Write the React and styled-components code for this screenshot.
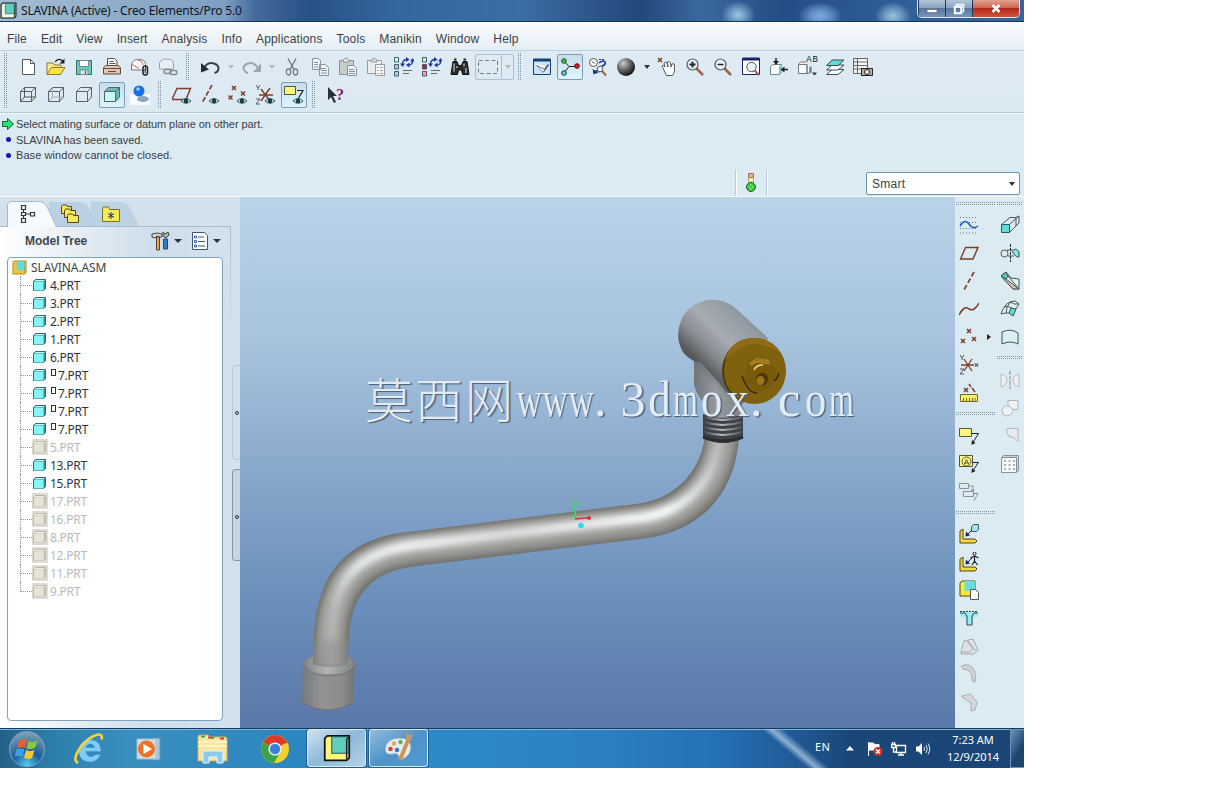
import React from "react";
import styled, { createGlobalStyle, css } from "styled-components";

const GlobalStyle = createGlobalStyle`
  * {
    box-sizing: border-box;
  }

  body {
    margin: 0;
    background: #fff;
    font-family: "Liberation Sans", Arial, sans-serif;
    color: #3a3f44;
    overflow: hidden;
  }

  svg {
    display: block;
    flex: none;
  }
`;

/* ---------- icons, all drawn on a 20 x 20 grid ---------- */

const K = "#222";
const B = "#7a3f28";
const G = "#9aa2a8";
const N = "#16246c";

const Eye = () => (
  <g>
    <path d="M9 16q5-5 10 0q-5 4.500-10 0z" fill="#e6f0f4" stroke="#26584f" />
    <circle cx="14" cy="16" r="2.300" fill="#143c3c" />
  </g>
);

const XMark = ({ x, y, c = B, s = 2 }) => (
  <path
    d={`M${x - s} ${y - s}l${2 * s} ${2 * s}M${x + s} ${y - s}l${-2 * s} ${2 * s}`}
    stroke={c}
    strokeWidth="1.500"
  />
);

const Plane = () => <path d="M1.500 16L6.500 4.500H19L14 16z" stroke={B} strokeWidth="1.400" />;

const Note = () => (
  <g>
    <path d="M.500 2.500h12v8H.500z" fill="#fcf77c" stroke="#554" />
    <path d="M13 7.500h6.500L13 18" stroke={K} />
    <path d="M12.500 19l.5-5 3.500 3z" fill={K} />
  </g>
);

const Cube = ({ front = "none", hidden, side = "none" }) => (
  <g stroke="#5c6165" strokeWidth="1">
    <path d="M2.500 6.500l4-4h11v9.500l-4 4.500h-11z" fill={side} />
    <path d="M2.500 6.500h11v10h-11z" fill={front} />
    <path d="M13.500 6.500l4-4" />
    {hidden && <path d="M6.500 2.500v9.500h11M2.500 16.500l4-4.500" stroke={hidden} />}
  </g>
);

const Magnifier = ({ children }) => (
  <g>
    <path d="M11 11l7 7" stroke="#a0604a" strokeWidth="2.500" />
    <circle cx="7.500" cy="7.500" r="5.500" fill="#e8f3f8" stroke="#555" strokeWidth="1.200" />
    {children}
  </g>
);

const Regen = ({ colors }) => (
  <g>
    {colors.map((c, i) => (
      <path key={i} d={`M.500 ${0.5 + i * 7}h4v4.500h-4z`} fill={c} stroke={i ? "#557" : "#366"} />
    ))}
    <path d="M8.500 7q0-4.500 4.500-4.500M18.500 3.500q.5 4.500-4 4.500" stroke="#1d3c9a" strokeWidth="1.400" />
    <path d="M12 0l3.500 2.500L12 5zM6 6.500h5l-2.500 3.500zM15.500 5.500L12 8l3.500 2.500zM16 4.500h5L18.500 1z" fill="#1d3c9a" />
    <path d="M9 13.500h9M9 16.500h6" stroke="#667" />
  </g>
);

const Binder = ({ line }) => (
  <g>
    <path d="M1 7l3-2v10h12l2 2-2 2H1z" fill="#f5d643" stroke="#54450f" />
    {line}
    <path d="M13 6L8 11" stroke={K} />
    <path d="M6.500 12.500l.5-5 4 4z" fill={N} />
  </g>
);

const icons = {
  newDoc: (
    <g>
      <path d="M4.500 2.500h8l4 4v11h-12z" fill="#fff" stroke="#555" />
      <path d="M12.500 2.500v4h4" stroke="#555" />
    </g>
  ),
  open: (
    <g>
      <path d="M1 17V6h6l1.500 2H15v3" fill="#fbe98a" stroke="#8a7a2a" />
      <path d="M1 17.500l4.500-7H19l-4.500 7z" fill="#fbe345" stroke="#8a7a2a" />
      <path d="M9 5q4-5 8-.5" stroke={K} strokeWidth="1.200" />
      <path d="M18.500 1.500v5h-5z" fill={K} />
    </g>
  ),
  save: (
    <g>
      <path d="M2.500 3.500h15v14h-15z" fill="#62d0bd" stroke="#466" />
      <path d="M5.500 3.500h9v6h-9z" fill="#fff" stroke="#788" />
      <path d="M6 13h8v4.500H6z" fill="#dde5e8" stroke="#788" />
      <path d="M11.500 14v3" stroke="#355" />
    </g>
  ),
  print: (
    <g>
      <path d="M5.500 9V1.500h7l2.500 2.500v5" fill="#fff" stroke="#555" />
      <path d="M7.500 4.500h4M7.500 6.500h6" stroke="#555" />
      <path d="M1.500 10.500l2-2h13l2 2v6.500h-17z" fill="#e0c6b3" stroke="#69493b" />
      <path d="M1.500 11.500h17M6 14.500h8" stroke="#69493b" strokeWidth="1.200" />
    </g>
  ),
  mail: (
    <g>
      <path d="M1.500 13V7q2-5 8-4.500 6 0 6 5V13z" fill="#fff" stroke="#777" />
      <path d="M2 7.500l7 4M8 3q5 1 5 5" stroke="#b06a50" />
      <rect x="13" y="9" width="4.500" height="9" rx="2.200" stroke={K} strokeWidth="1.500" />
      <path d="M15.200 11v5" stroke={K} />
    </g>
  ),
  mailLink: (
    <g>
      <path d="M1.500 12V6q2-4.500 8-4 6 0 6 5v5z" fill="#e8eff3" stroke={G} />
      <rect x="6" y="12.500" width="7" height="4" rx="2" stroke="#888" strokeWidth="1.300" />
      <rect x="12" y="13.500" width="7" height="4" rx="2" stroke="#888" strokeWidth="1.300" />
    </g>
  ),
  undo: (
    <g>
      <path d="M4 11q4-6.500 10-4.500t4 7q-1 2-3.500 2.500" stroke="#3b4046" strokeWidth="2" />
      <path d="M1 6v9.500l8-3z" fill="#222b35" />
    </g>
  ),
  redo: (
    <g>
      <path d="M16 11q-4-6.500-10-4.500t-4 6.500q1 2.500 4 3" stroke="#9ea6ab" strokeWidth="2" />
      <path d="M19 6v9h-8z" fill="#9ea6ab" />
    </g>
  ),
  cut: (
    <g stroke="#757c82">
      <path d="M6 1.500l6 11M14 1.500l-6 11" strokeWidth="1.500" />
      <ellipse cx="6.500" cy="15" rx="2.200" ry="3" strokeWidth="1.300" />
      <ellipse cx="13.500" cy="15" rx="2.200" ry="3" strokeWidth="1.300" />
    </g>
  ),
  copy: (
    <g fill="#edf3f6" stroke="#8e969c">
      <path d="M2.500 1.500h6l2 2v9h-8zM9.500 7.500h6l3 3v8h-9z" />
      <path d="M4 5.500h4M4 7.500h4M4 10h4M11 11.500h5M11 13.500h6M11 16h6" />
    </g>
  ),
  paste: (
    <g fill="#c9ccca" stroke="#8b9196">
      <path d="M1.500 3.500h14v14h-14z" />
      <path d="M5 5V3l3-2 3 2v2z" fill="#eee" />
      <path d="M9.500 8.500h6l3 3v7h-9z" fill="#eef3f5" />
      <path d="M11 12.500h5M11 14.500h6M11 16.500h6" />
    </g>
  ),
  pasteSpecial: (
    <g fill="#eceeee" stroke="#979da1">
      <path d="M1.500 3.500h14v13h-14z" />
      <path d="M5 5V3l3-2 3 2v2z" fill="#ddd" />
      <path d="M9.500 7.500h9v11h-9z" fill="#f4f6f7" />
      <path d="M11 10.500h1.500M14 10.500h3M11 13.500h1.500M14 13.500h3M11 16.500h1.500M14 16.500h3" />
    </g>
  ),
  regen: <Regen colors={["#e8fff6", "#8fe0c0", "#8fe0c0"]} />,
  regenRed: <Regen colors={["#ffd9d9", "#c41f1f", "#ff9b9b"]} />,
  find: (
    <g>
      <path d="M3 4.500h4l1.500 4h3L13 4.500h4l2 13h-6.500L11.500 13h-3l-1 4.500H1z" fill="#2a2c2c" stroke="#111" />
      <path d="M4 6.500v8M7 9v2M14 6.500v3M16 11v5" stroke="#c8d0c8" strokeWidth="1.200" />
      <path d="M4 2.500h2.500M13.500 2.500H16" stroke="#222" strokeWidth="2" />
    </g>
  ),
  select: <path d="M.500 3.500h19v13H.500z" stroke="#737d84" strokeDasharray="4 2.500" />,
  repaint: (
    <g>
      <path d="M1.500 2.500h17v15h-17z" fill="#c8e4f8" stroke="#173f74" />
      <path d="M1.500 3h17" stroke="#173f74" strokeWidth="3" />
      <path d="M4 8l8 8M4 8l9 2" stroke="#fff" strokeWidth="2" />
      <path d="M11 15l5.500-7.500" stroke="#555" strokeWidth="1.500" />
      <path d="M4.500 8.500l6.500 7 2-3z" fill="#fff" stroke="#345" strokeWidth=".7" />
    </g>
  ),
  spin: (
    <g>
      <path d="M4 4l5 5.500M9 9.500h8M9 9.500L4 16" stroke={K} />
      <circle cx="4" cy="4" r="2.300" fill="#44b556" stroke="#145b20" />
      <circle cx="17" cy="9" r="2.300" fill="#d1212c" stroke="#601" />
      <circle cx="4" cy="16" r="2.300" fill="#65d8df" stroke="#134" />
    </g>
  ),
  orient: (
    <g>
      <circle cx="5.500" cy="5.500" r="4" fill="#f6fafc" stroke="#555" />
      <path d="M4 4.500l2.500 2" stroke="#555" />
      <path d="M11 2.500h6" stroke="#1b3193" strokeDasharray="2 1" />
      <path d="M11 6q5-4 6.500 0-1 3-4 3M6 16q3-4 6-1" stroke="#1b3193" strokeWidth="1.500" />
      <path d="M4.500 12l1 5.500 5-2z" fill="#1b3193" />
      <path d="M14 14l4 4.500" stroke="#a0604a" strokeWidth="2" />
      <circle cx="12" cy="12" r="2.800" fill="#f6fafc" stroke="#555" />
    </g>
  ),
  sphere: <circle cx="10" cy="10" r="9" fill="url(#ball)" />,
  hand: (
    <g>
      <XMark x={3} y={3} />
      <path
        d="M5 9q1-2 3 1L7 6q2-2 3 0l1 4-.500-5q2-1.500 3 .5L14 10l1-3q2-1 2.500 1v6q-1 3-2 4.500H9.500z"
        fill="#fff"
        stroke="#555"
      />
    </g>
  ),
  zoomIn: (
    <Magnifier>
      <path d="M4.500 7.500h6M7.500 4.500v6" stroke={K} strokeWidth="1.800" />
    </Magnifier>
  ),
  zoomOut: (
    <Magnifier>
      <path d="M4.500 7.500h6" stroke={K} strokeWidth="1.500" />
    </Magnifier>
  ),
  refit: (
    <g>
      <path d="M1.500 1.500h17v16h-17z" fill="#fff" stroke={N} />
      <path d="M1.500 2h17" stroke={N} strokeWidth="3" />
      <path d="M13 13l5 5" stroke="#a0604a" strokeWidth="2" />
      <circle cx="10.500" cy="10" r="4.700" fill="#e6f2f6" stroke="#555" />
    </g>
  ),
  reorient: (
    <g>
      <path d="M1.500 9.500l2-2h9v8l-2 2h-9z" fill="#fff" stroke="#688" />
      <path d="M10 9.500l3-2v8l-3 2z" fill="#69cbc3" />
      <path d="M7 1v5M19 12.500h-5" stroke={K} strokeWidth="1.500" />
      <path d="M4 4h6L7 8zM15.500 9.500v6l-4-3z" fill={K} />
    </g>
  ),
  saved: (
    <g>
      <path d="M1.500 7.500l2-2.500H9M1.500 7.500h8.500v9H1.500zM10 7.500v9l4-1V10" fill="#fff" stroke="#777" />
      <path d="M12 9.500h2.500v6H12z" fill="#7d96a6" />
      <path d="M15 15.500h5L17.500 18.500z" fill="#234" />
    </g>
  ),
  layers: (
    <g stroke="#3c4b50">
      <path d="M1.500 17.500L7 12.500h12l-6 5z" fill="#fff" />
      <path d="M1.500 13L7 8h12l-6 5z" fill="#fff" />
      <path d="M1.500 8.500L7 3h12l-6 5.500z" fill="#62dcd8" />
    </g>
  ),
  viewMgr: (
    <g>
      <path d="M.500 1.500h14v15H.500zM.500 5h14M.500 8.500h14M.500 12h14M4.500 1.500v15" fill="#f6f6f6" stroke="#666" />
      <path d="M8.500 11.500h11v7h-11z" fill="#b5ad98" stroke={K} />
      <circle cx="14" cy="15" r="2.500" fill="#eee" stroke={K} />
    </g>
  ),
  wire: <Cube hidden="#555" />,
  hiddenLine: <Cube hidden="#aab" />,
  noHidden: <Cube />,
  shaded: <Cube front="#c9fafa" side="#6ab9b8" />,
  enhanced: (
    <g>
      <path d="M0 9h20v11H0z" fill="#fff" opacity=".8" />
      <ellipse cx="13" cy="14" rx="6" ry="3" fill="#8fa3c2" />
      <circle cx="9" cy="6" r="5.500" fill="#1671e6" />
      <circle cx="8" cy="4" r="1.800" fill="#9fd0ff" />
    </g>
  ),
  datumPlane: (
    <g>
      <path d="M0 14.500L5 3.500H18.500L14 14.500z" stroke={B} strokeWidth="1.400" />
      <Eye />
    </g>
  ),
  datumAxis: (
    <g>
      <path d="M12 0L2 18" stroke={B} strokeWidth="1.600" strokeDasharray="5 2" />
      <Eye />
    </g>
  ),
  datumPoint: (
    <g>
      <XMark x={6} y={3} />
      <XMark x={2.500} y={12.500} />
      <XMark x={15} y={8.500} />
      <Eye />
    </g>
  ),
  datumCsys: (
    <g>
      <path d="M3 10h14M5 4l9 12M14 3L5 16" stroke={B} strokeWidth="1.400" />
      <path d="M0 0l2 3 2-3M2 3v2M0 14h4l-4 5h4" stroke="#556" />
      <Eye />
    </g>
  ),
  noteEye: (
    <g>
      <path d="M.500 1.500h11v8H.500z" fill="#fcf77c" stroke="#554" />
      <path d="M13 5.500h6L14 14" stroke={K} strokeWidth="1.200" />
      <Eye />
    </g>
  ),
  help: <path d="M2 2v13l3-3 3 6 2-1-3-6h4z" fill="#2b3036" />,
  sketch: (
    <g>
      <path d="M1 2.500h18M1 7.500h18M1 13.500h18M1 18h18" stroke="#5474a6" strokeDasharray="1 2" />
      <path d="M1 11q5-8 9-2t9 2" stroke="#2562c0" strokeWidth="1.600" />
    </g>
  ),
  plane: <Plane />,
  axis: <path d="M15 1L5 19" stroke={B} strokeWidth="1.700" strokeDasharray="5 2.500" />,
  curve: <path d="M0 16q5-10 10-6 5 3 10-6" stroke={B} strokeWidth="1.500" />,
  points: (
    <g>
      <XMark x={10} y={4} />
      <XMark x={4} y={14} />
      <XMark x={15} y={12} />
    </g>
  ),
  csys: (
    <g>
      <path d="M2 10h13M5 4l8 12M13 4L5 16" stroke={B} strokeWidth="1.300" />
      <path d="M1 0l2 3 2-3M3 3v2M1 14h4l-4 5h4" stroke="#556" />
      <XMark x={17.500} y={10} c="#667" s={1.500} />
    </g>
  ),
  analysis: (
    <g>
      <XMark x={7} y={7} />
      <path d="M10 1l2 3M13 5l3 4" stroke={B} strokeWidth="1.500" />
      <path d="M1.500 11.500h17v7h-17z" fill="#f7ee6a" stroke="#736a25" />
      <path d="M4.500 15v3M7.500 15v3M10.500 15v3M13.500 15v3M16 15v3" stroke="#736a25" />
    </g>
  ),
  note: <Note />,
  noteSym: (
    <g>
      <path d="M.500 1.500h13v11H.500z" fill="#fcf77c" stroke="#554" />
      <path d="M14 8.500h5.500L13 18" stroke={K} />
      <path d="M12.500 19l.5-5 3.500 3z" fill={K} />
      <circle cx="7.500" cy="7.500" r="4.500" stroke="#554" />
      <path d="M5 10.500l2.500-5 2.500 5M6 9h3" stroke="#554" />
    </g>
  ),
  noteGray: (
    <g stroke="#8b9298">
      <path d="M.500 1.500h9v5h-9zM4.500 9.500h10v5h-10zM10 4h4v4M15 11.500h4l-4 7" />
      <path d="M12 8h3l-1.500 2z" />
    </g>
  ),
  assemble: <Binder line={<path d="M12.500 2.500l2-2h5v5l-2 2h-5z" fill="#a3dfec" stroke="#456" />} />,
  manikin: (
    <Binder
      line={
        <g stroke={K}>
          <circle cx="15.500" cy="1.500" r="1.500" />
          <path d="M11.500 6l4-2 4 2M15.500 4v5l-2.500 4M15.500 9l3 4" strokeWidth="1.200" />
        </g>
      }
    />
  ),
  component: (
    <g>
      <path d="M1 3l2-2h13v13l-2 2H1z" fill="#f6e83e" stroke="#54450f" />
      <path d="M5.500 1h10.500v10H5.500z" fill="#65dfdc" />
      <path d="M11.500 9.500h5l3 3v7h-8z" fill="#fff" stroke="#555" />
    </g>
  ),
  trough: (
    <g>
      <path d="M1 4h18v4l-5 2v7H7v-7L1 8z" fill="#9ceef0" />
      <path d="M1 5h5l2 3v9h5V8l2-3h4" stroke="#345" />
      <path d="M1 3.500h18" stroke="#345" strokeDasharray="2 1" />
    </g>
  ),
  grayA: (
    <g fill="#dde2e5" stroke="#a5abaf">
      <path d="M2 16L5 5l9-2 5 11-4 4-13 0z" />
      <path d="M2 16h9l3-3-6-8M9 5l8 10" />
    </g>
  ),
  grayB: <path d="M2 2q9-4 13 4 3 5 1 12l-3-1q1-9-5-11-5 0-6-4z" fill="#cfd4d8" stroke="#a9aeb2" />,
  grayC: <path d="M3 4l8-2 7 8-2 8-4 1V11L3 5z" fill="#d4d8db" stroke="#a9aeb2" />,
  extrude: (
    <g>
      <path d="M10 2.500h6l3-1.500v7l-3 3v-8l3-2" stroke="#48555b" />
      <path d="M1.500 9.500L10 2.500M9.500 9.500L16 3.500M9.500 17.500l6.500-6.500" stroke="#48555b" />
      <path d="M1.500 9.500h8v8h-8z" fill="#55e2df" stroke="#355" />
    </g>
  ),
  revolve: (
    <g>
      <circle cx="4.500" cy="10.500" r="3.500" stroke="#555" />
      <path d="M10.500 1v18" stroke={K} strokeDasharray="3 1" />
      <path d="M12 8q4-4 7 1v5q-3 1-7-6z" fill="#8be4dd" stroke="#355" />
      <path d="M7 7h5M8 13h6" stroke="#355" />
    </g>
  ),
  sweep: (
    <g stroke="#455">
      <path d="M1 5l5-4 5 6 8 1v10h-6z" fill="#d9f6f3" />
      <path d="M1 5l5 3 13 10h-6z" fill="#e5b9b4" />
      <path d="M1 5l5-4 2 4-2 3z" fill="#55c9c0" />
      <path d="M8 5l11 13" />
    </g>
  ),
  blend: (
    <g stroke="#455">
      <path d="M1 15Q5 2 15 2l4 3q-4 5-6 12-3-5-12-2z" fill="#dff6f6" />
      <path d="M10 3q4 3 9 2M4 8q6-2 11 4" />
      <path d="M11 9l5 1-3 7-4-3z" fill="#5cdfdc" />
      <path d="M10 3Q6 8 6 14" />
    </g>
  ),
  style: <path d="M2 5q9-4 16 1v11q-8-4-16 0z" fill="#d9eff2" stroke="#48555b" />,
  mirror: (
    <g stroke="#b9bfc3" fill="#e8edef">
      <path d="M1 17V4q6 1 6 6 0 6-6 7zM19 17V4q-6 1-6 6 0 6 6 7z" />
      <path d="M10 1v18" strokeDasharray="4 1" stroke="#889" />
    </g>
  ),
  merge: (
    <g stroke="#b0b6ba" fill="#eff2f4">
      <path d="M8 2.500h10v9H8z" />
      <path d="M2 12q1-5 7-4l4 3q0 6-6 7-5-1-5-6z" />
    </g>
  ),
  trim: <path d="M7 2.500h11v13l-4-4-5-1q-3-4-2-8z" fill="#e8ecee" stroke="#b0b6ba" />,
  pattern: (
    <g>
      <path d="M1.500 3.500l2-2h15v15l-2 2h-15z" fill="#cbd1d6" stroke="#8a9298" />
      <path d="M1.500 3.500h15v15h-15z" fill="#f6f8fa" stroke="#8a9298" />
      <path d="M4 7h11M4 11h11M4 15h11" stroke="#8e98ac" strokeWidth="1.500" strokeDasharray="2 2.500" />
    </g>
  ),
  tree: (
    <path d="M2.500 1.500h4v4h-4zM2.500 8.500h4v3h-4zM2.500 14.500h4v4h-4zM11.500 8.500h4v3.500h-4zM4.500 5.500v3M6.500 10h5M4.500 11.500v3" stroke="#333" strokeWidth="1.200" />
  ),
  folders: (
    <g fill="#f8e95c" stroke="#4d4620">
      <path d="M1.500 2.500l1-1.500h4l1 1.500h4v7h-10z" />
      <path d="M4.500 6.500l1-1.500h4l1 1.500h5v7h-11z" />
      <path d="M7.500 11.500l1-1.500h4l1 1.500h5v7h-11z" />
    </g>
  ),
  favorites: (
    <g>
      <path d="M1.500 5.500l1-2.500h5l1 2.500h10v12h-17z" fill="#f8ec55" stroke="#777033" />
      <path d="M10 8v7M7 9.500l6 4M13 9.500l-6 4" stroke={N} />
    </g>
  ),
  tools: (
    <g>
      <path d="M1 6V3q6-2 10 0v3H8L6 5 4 7z" fill="#cdd6da" stroke="#444" />
      <path d="M5.500 6h3v13h-3z" fill="#f5a933" stroke="#444" />
      <path d="M12 1l2 2 3-2 1 3-3 3-3-2z" fill="#9ba" stroke="#444" />
      <path d="M12.500 8h4v10h-4z" fill="#2e7ad1" stroke="#444" />
    </g>
  ),
  settings: (
    <g>
      <path d="M2.500 1.500h12l3 3v14h-15z" fill="#fff" stroke="#456" />
      <path d="M8 6h6M8 10.500h7M8 15h7" stroke="#456" strokeWidth="1.200" />
      <path d="M4.500 5h2v2h-2zM4.500 9.500h2v2h-2zM4.500 14h2v2h-2z" stroke="#2a63b5" />
    </g>
  ),
  light: (
    <g>
      <path d="M7.500 .500h5v4h-5z" fill="#efa4a1" stroke="#a66" />
      <path d="M7.500 5h5v4h-5z" fill="#ffffc2" stroke="#aa5" />
      <circle cx="10" cy="14" r="4.500" fill="#3dc443" stroke="#1a6420" />
      <path d="M7 13l4 4M9 11l4 4" stroke="#8fef8d" />
    </g>
  ),
};

const Icon = ({ name, size = 20 }) => (
  <svg width={size} height={size} viewBox="0 0 20 20" fill="none">
    {icons[name]}
  </svg>
);

const App = () => {
  return (
    <Desktop>
      <GlobalStyle />
      <Defs width="0" height="0">
        <radialGradient id="ball" cx=".35" cy=".3" r=".75">
          <stop offset="0" stopColor="#ccc" />
          <stop offset=".5" stopColor="#666" />
          <stop offset="1" stopColor="#0c0c0c" />
        </radialGradient>
      </Defs>
      <TitleBar />
      <MenuBar />
      <Toolbars />
      <Messages />
      <Workspace>
        <Navigator />
        <Viewport />
        <FeatureBar />
      </Workspace>
      <Taskbar />
    </Desktop>
  );
};

/* ---------- window frame ---------- */

const PartLogo = ({ size = 16, c = "#f8f47c", plain }) => (
  <svg width={size} height={size} viewBox="0 0 16 16">
    <path d="M1 2.500L2.500 1H15v12.500L13.500 15H1z" fill={c} stroke={plain ? "#a18b25" : "#111"} />
    <path d="M5 1.500h9.500V11H5z" fill={plain ? "#62dce0" : "#5fcfc0"} stroke={plain ? "none" : "#355"} strokeWidth=".6" />
    <path d="M13.500 3v11.500M13.500 3L15 1.500" stroke={plain ? "#b48c22" : "#222"} strokeWidth=".8" />
  </svg>
);

const TitleBar = () => (
  <Title>
    <PartLogo size={17} c="#eef7df" />
    <TitleText>SLAVINA (Active) - Creo Elements/Pro 5.0</TitleText>
    <WindowButtons>
      <WinButton $w={27}>
        <svg width="12" height="8" viewBox="0 0 12 8">
          <path d="M1 4.500h10v3H1z" fill="#fff" stroke="#445" strokeWidth=".5" />
        </svg>
      </WinButton>
      <WinButton $w={27}>
        <svg width="12" height="12" viewBox="0 0 12 12" fill="none" stroke="#fff">
          <path d="M3.500 3V1.500h7v7H9" strokeWidth="1.500" />
          <path d="M1.800 3.800h6.400v6.400H1.800z" strokeWidth="2" />
        </svg>
      </WinButton>
      <WinButton $w={47} $close>
        <svg width="10" height="9" viewBox="0 0 10 9">
          <path d="M1.500 1l7 7M8.500 1l-7 7" stroke="#fff" strokeWidth="2.600" />
        </svg>
      </WinButton>
    </WindowButtons>
  </Title>
);

const menus = [
  "File",
  "Edit",
  "View",
  "Insert",
  "Analysis",
  "Info",
  "Applications",
  "Tools",
  "Manikin",
  "Window",
  "Help",
];

const MenuBar = () => (
  <Menu>
    {menus.map((m) => (
      <span key={m}>{m}</span>
    ))}
  </Menu>
);

const Tools = ({ names, active }) =>
  names.split(" ").map((n) => (
    <Cell key={n} $active={n === active}>
      <Icon name={n} />
    </Cell>
  ));

const Toolbars = () => (
  <ToolArea>
    <ToolRow>
      <Handle />
      <Tools names="newDoc open save print mail mailLink" />
      <Handle />
      <Tools names="undo" />
      <CaretBox $w={14}>
        <Caret $dim />
      </CaretBox>
      <Tools names="redo" />
      <CaretBox $w={12}>
        <Caret $dim />
      </CaretBox>
      <Tools names="cut copy paste pasteSpecial regen regenRed find" />
      <SelectTool>
        <Icon name="select" />
        <SelectCaret>
          <Caret $dim />
        </SelectCaret>
      </SelectTool>
      <Handle />
      <Tools names="repaint spin orient sphere" active="spin" />
      <CaretBox $w={13}>
        <Caret />
      </CaretBox>
      <Tools names="hand zoomIn zoomOut refit reorient" />
      <Cell>
        <Icon name="saved" />
        <Letters>AB</Letters>
      </Cell>
      <Tools names="layers viewMgr" />
    </ToolRow>
    <ToolRow>
      <Handle />
      <Tools names="wire hiddenLine noHidden shaded enhanced" active="shaded" />
      <Handle />
      <Tools names="datumPlane datumAxis datumPoint datumCsys noteEye" active="noteEye" />
      <Handle />
      <Cell>
        <Icon name="help" />
        <Question>?</Question>
      </Cell>
    </ToolRow>
  </ToolArea>
);

const Messages = () => (
  <MessageArea>
    <MessageLine>
      <svg width="12" height="12" viewBox="0 0 12 12">
        <path d="M.500 3.500h5V.500L11.500 6l-6 5.500v-3h-5z" fill="#2be070" stroke="#063" />
      </svg>
      Select mating surface or datum plane on other part.
    </MessageLine>
    <MessageLine>
      <Bullet />
      SLAVINA has been saved.
    </MessageLine>
    <MessageLine $wide>
      <Bullet />
      Base window cannot be closed.
    </MessageLine>
    <StatusLine>
      <StatusLight>
        <Icon name="light" />
      </StatusLight>
      <Filter>
        Smart
        <Caret />
      </Filter>
    </StatusLine>
  </MessageArea>
);

/* ---------- navigator ---------- */

const parts = [
  { name: "4.PRT" },
  { name: "3.PRT" },
  { name: "2.PRT" },
  { name: "1.PRT" },
  { name: "6.PRT" },
  { name: "7.PRT", packed: true },
  { name: "7.PRT", packed: true },
  { name: "7.PRT", packed: true },
  { name: "7.PRT", packed: true },
  { name: "5.PRT", off: true },
  { name: "13.PRT" },
  { name: "15.PRT" },
  { name: "17.PRT", off: true },
  { name: "16.PRT", off: true },
  { name: "8.PRT", off: true },
  { name: "12.PRT", off: true },
  { name: "11.PRT", off: true },
  { name: "9.PRT", off: true },
];

const PartIcon = ({ off }) => (
  <svg width="16" height="16" viewBox="0 0 16 16">
    {off && <path d="M0 0h16v16H0z" fill="#dedbd0" />}
    <path d="M1.500 4.500l2-2h10v9l-2 2h-10z" fill={off ? "#c9c7bc" : "#3d8f93"} stroke={off ? "#b8b6aa" : "#37686b"} />
    <path d="M2 4.500h9.500v9H2z" fill={off ? "#e8e4d8" : "#84f4f7"} />
    <path d="M2.500 4l1.500-1h9l-1.500 1z" fill={off ? "#f5f2e8" : "#c8ffff"} />
  </svg>
);

const Navigator = () => (
  <NavPanel>
    <NavMain>
      <Tabs>
        <svg width="140" height="26" viewBox="0 0 140 26">
          <path d="M84 25V1h31q5 0 8 6l9 18z" fill="#bdd3e4" />
          <path d="M42 25V1h32q5 0 8 6l9 18z" fill="#bad1e3" />
          <path d="M.500 26V4q0-3.500 4-3.500h27q6 0 9 6l9 19.500z" fill="#f7fafc" />
          <path d="M.500 26V4q0-3.500 4-3.500h27q6 0 9 6l9 19.500" fill="none" stroke="#a6b9c9" />
        </svg>
        <TabIcons>
          <Icon name="tree" />
          <Icon name="folders" />
          <Icon name="favorites" />
        </TabIcons>
      </Tabs>
      <NavBody>
        <NavHeader>
          <NavTitle>Model Tree</NavTitle>
          <NavTool>
            <Icon name="tools" />
            <Caret $big />
          </NavTool>
          <NavTool>
            <Icon name="settings" />
            <Caret $big />
          </NavTool>
        </NavHeader>
        <TreeBox>
          <RootRow>
            <PartLogo size={15} c="#f3c43e" plain />
            SLAVINA.ASM
          </RootRow>
          {parts.map((p, i) => (
            <TreeRow key={i} $off={p.off} $last={i === parts.length - 1}>
              <PartIcon off={p.off} />
              {p.packed && <Packed />}
              <span>{p.name}</span>
            </TreeRow>
          ))}
        </TreeBox>
      </NavBody>
    </NavMain>
    <Splitters>
      <Splitter>
        <Dot />
      </Splitter>
      <Splitter $dark>
        <Dot />
      </Splitter>
    </Splitters>
  </NavPanel>
);

/* ---------- 3D view ---------- */

const TUBE = "M330 668L331 640C333 585 355 556 415 548L640 521C690 515 718 480 722 436";

const Faucet = () => (
  <svg width="715" height="531" viewBox="240 197 715 531" fill="none">
    <defs>
      <filter id="soft3" filterUnits="userSpaceOnUse" x="240" y="197" width="715" height="531">
        <feGaussianBlur stdDeviation="3" />
      </filter>
      <filter id="soft2" filterUnits="userSpaceOnUse" x="240" y="197" width="715" height="531">
        <feGaussianBlur stdDeviation="2" />
      </filter>
      <linearGradient id="shine" gradientUnits="userSpaceOnUse" x1="330" y1="0" x2="725" y2="0">
        <stop offset="0" stopColor="#e8efef" stopOpacity="0" />
        <stop offset=".07" stopColor="#e8efef" stopOpacity=".75" />
        <stop offset=".2" stopColor="#eceeed" />
        <stop offset=".45" stopColor="#e3e4e2" stopOpacity=".75" />
        <stop offset=".85" stopColor="#f4f8f8" />
        <stop offset=".97" stopColor="#e8efef" stopOpacity=".3" />
        <stop offset="1" stopColor="#e8efef" stopOpacity="0" />
      </linearGradient>
      <linearGradient id="body" gradientUnits="userSpaceOnUse" x1="748" y1="312" x2="699" y2="362">
        <stop offset="0" stopColor="#7f8991" />
        <stop offset=".15" stopColor="#959da4" />
        <stop offset=".5" stopColor="#a5acb2" />
        <stop offset=".78" stopColor="#868b8f" />
        <stop offset="1" stopColor="#56595c" />
      </linearGradient>
      <linearGradient id="neck">
        <stop offset="0" stopColor="#6e7478" />
        <stop offset=".4" stopColor="#959ba0" />
        <stop offset="1" stopColor="#7b7e80" />
      </linearGradient>
      <linearGradient id="thread">
        <stop offset="0" stopColor="#45474a" />
        <stop offset=".45" stopColor="#b8bdbe" />
        <stop offset="1" stopColor="#515457" />
      </linearGradient>
      <linearGradient id="cap">
        <stop offset="0" stopColor="#77797b" />
        <stop offset=".35" stopColor="#929392" />
        <stop offset=".75" stopColor="#8c8c8b" />
        <stop offset="1" stopColor="#737476" />
      </linearGradient>
      <linearGradient id="rim">
        <stop offset="0" stopColor="#7f8385" />
        <stop offset=".45" stopColor="#b2b5b5" />
        <stop offset="1" stopColor="#7f8284" />
      </linearGradient>
      <clipPath id="tubeClip">
        <path d="M313 664L314 640C316 575 345 537 412 531.500L636 504C672 500 700 475 705 436L739 436C736 492 702 532 643 538.500L417 566C367 571 350 600 349 640L347 664q-17 6-34 0z" />
      </clipPath>
    </defs>

    {/* outlet collar */}
    <path d="M303 665q0-8 8-8h36q8 0 8 8L353 703q-24 14-51 0z" fill="url(#cap)" />
    <path d="M304 662q4-5 12-5h28q9 1 11 6-3 11-26 11-22 0-25-12z" fill="url(#rim)" />
    <path d="M303 666q8 10 26 10t26-10" stroke="#747779" />
    <path d="M302 703q25 14 51 0" stroke="#6d706f" />

    {/* spout */}
    <g clipPath="url(#tubeClip)">
      <path d={TUBE} stroke="#6e6d6a" strokeWidth="46" />
      <path d={TUBE} stroke="#979793" strokeWidth="29" filter="url(#soft3)" />
      <path d={TUBE} stroke="#acadab" strokeWidth="16" filter="url(#soft3)" transform="translate(-1 -2)" />
      <path d={TUBE} stroke="url(#shine)" strokeWidth="10" filter="url(#soft3)" transform="translate(-1 -3)" />
      <path d={TUBE} stroke="url(#shine)" strokeWidth="3" filter="url(#soft2)" transform="translate(-1 -3)" />
      <path d="M305 640h50v30h-50z" fill="#8b8b8a" opacity=".45" filter="url(#soft3)" />
    </g>

    {/* valve body */}
    <path d="M694 350V384Q696 395 705 404V418H742V404L750 398L735 350z" fill="url(#neck)" />
    <path d="M678 336Q679 308 704 301Q720 297 734 307L768 338L740 400Q727 396 720 384L701 363Q680 359 678 336z" fill="url(#body)" />
    <path d="M697 362L722 386L738 402" stroke="#666b70" strokeWidth="2" filter="url(#soft2)" />

    {/* thread */}
    <path d="M703 414q19 8 40 0v24q-20 10-40 0z" fill="#3e4145" />
    {[417, 422, 427, 432].map((y) => (
      <path key={y} d={`M704 ${y}q19 6 38 0`} stroke="url(#thread)" strokeWidth="2" />
    ))}
    <path d="M703 437q20 8 40 0" stroke="#292c30" strokeWidth="3" />

    {/* brass plug */}
    <ellipse cx="752" cy="371" rx="30" ry="32" fill="#49390c" />
    <ellipse cx="755" cy="371" rx="31" ry="33" fill="#80610f" />
    <path d="M725 360Q731 339 752 338Q773 338 780 353Q758 338 741 348Q728 356 725 360z" fill="#8e6b15" />
    <path d="M748 360l20-2 10 15-6 13-15 7-13-14z" fill="#785a0a" />
    <path d="M749 363l7-5 12 1 3 6-14-2-6 3z" fill="#a07c1f" />
    <path d="M754 370q2-5 9-5" stroke="#f4d987" strokeWidth="1.500" />
    <path d="M742 376q6 17 15 17M774 381q4-3 5-8" stroke="#332707" strokeWidth="1.400" />
    <ellipse cx="762" cy="379" rx="6" ry="6.500" fill="#4c3905" />
    <ellipse cx="760.500" cy="380.500" rx="4" ry="4.500" fill="#9b761a" />

    {/* spin center */}
    <path d="M575 518v-12M571 505l4-3 4 3" stroke="#2fe05a" strokeWidth="1.500" />
    <path d="M575 519l12-1" stroke="#d83030" strokeWidth="1.300" />
    <circle cx="589" cy="518" r="2" fill="#e03030" />
    <circle cx="581" cy="525.500" r="2.800" fill="#27d9ee" />
  </svg>
);

const squeeze = { w: 0.7, m: 0.64, d: 0.9, o: 0.85, x: 0.9 };

const Viewport = () => (
  <View>
    <Faucet />
    <Watermark>
      <Hanzi>莫西网</Hanzi>
      {"www.3dmox.com".split("").map((ch, i) => (
        <Glyph key={i} $x={squeeze[ch] || 1} $left={ch === "."}>
          <span>{ch}</span>
        </Glyph>
      ))}
    </Watermark>
  </View>
);

const SideTools = ({ names }) =>
  names.split(" ").map((n) => (
    <Cell key={n}>
      <Icon name={n} />
      {n === "points" && <Flyout />}
    </Cell>
  ));

const FeatureBar = () => (
  <Side>
    <SideCol $w={41}>
      <Rule />
      <SideTools names="sketch plane axis curve points csys analysis" />
      <Rule />
      <SideTools names="note noteSym noteGray" />
      <Rule />
      <SideTools names="assemble manikin component trough grayA grayB grayC" />
    </SideCol>
    <SideCol $w={28}>
      <Rule />
      <SideTools names="extrude revolve sweep blend style" />
      <Rule />
      <SideTools names="mirror merge trim pattern" />
    </SideCol>
  </Side>
);

/* ---------- taskbar ---------- */

const StartOrb = () => (
  <svg width="38" height="38" viewBox="0 0 38 38">
    <defs>
      <radialGradient id="orb" cx=".5" cy=".95" r=".9">
        <stop offset="0" stopColor="#4fd0f5" />
        <stop offset=".45" stopColor="#185d95" />
        <stop offset="1" stopColor="#7d9eb5" />
      </radialGradient>
    </defs>
    <circle cx="19" cy="19" r="17.500" fill="url(#orb)" stroke="#79a5bf" />
    <path d="M11 11q4-3 8-.5L17 18q-4-2-8 0z" fill="#e9602c" />
    <path d="M20.500 11q4 2 9-.5L27 18q-4 2-8.500.5z" fill="#8cc63f" />
    <path d="M8.500 19.500q4-2 8 0L14.500 27q-4-2-8 0z" fill="#3f9fe6" />
    <path d="M18 20q4 2 8.500 0L24 28q-4 2-8-.5z" fill="#fdc72e" />
  </svg>
);

const IeLogo = () => (
  <svg width="32" height="32" viewBox="0 0 32 32" fill="none">
    <path d="M28 18.500H13q.500 5 5 5 3 0 4.500-2H27.500q-3 7.500-10.500 7.500Q6 28.500 5.500 17.500 7 7 17 6.500q11 .5 11 12zM13 14.500h8.500q-1-3.500-4.200-3.500T13 14.500z" fill="#7fcdf6" stroke="#3c97d2" strokeWidth=".7" />
    <path d="M5 30Q-1 27 7 15 15 4 25 1.500q5-.5 3.500 5" stroke="#f4d23a" strokeWidth="2.600" />
  </svg>
);

const MediaLogo = () => (
  <svg width="26" height="26" viewBox="0 0 26 26">
    <path d="M17 2h7v22h-7z" fill="#a9c9df" stroke="#5f93b8" />
    <path d="M1 3h19v20H1z" fill="#cfdce6" stroke="#a3bccd" />
    <circle cx="10.500" cy="13" r="8.500" fill="#ee7225" />
    <path d="M7.500 8l8.500 5-8.500 5z" fill="#fff" />
  </svg>
);

const ExplorerLogo = () => (
  <svg width="34" height="30" viewBox="0 0 34 30">
    <path d="M2 3q0-2 2-2h8l2 2h15q2 0 2 2v22H2z" fill="#f7e6a0" stroke="#c9ac5a" />
    <path d="M5 2.500h4M15 4h3" stroke="#3fa34c" strokeWidth="2" />
    <path d="M12 3.500h3M24 4.500h4" stroke="#c54334" strokeWidth="2" />
    <path d="M2 8h29M2 12h29" stroke="#fff6cf" strokeWidth="1.500" />
    <path d="M7 29V17h20v12h-6v-6h-8v6z" fill="#8ccbec" stroke="#e2f6ff" />
  </svg>
);

const ChromeLogo = () => (
  <svg width="30" height="30" viewBox="0 0 30 30">
    <circle cx="15" cy="15" r="14" fill="#f6cf2f" />
    <path d="M15 15L2.900 8A14 14 0 0 1 27.100 8z" fill="#dc3a2c" />
    <path d="M15 15L2.900 8A14 14 0 0 0 14 29l7-12z" fill="#3ba24a" />
    <path d="M15 8.500h12.400" stroke="#dc3a2c" strokeWidth="1.500" />
    <circle cx="15" cy="15" r="6.600" fill="#f2f2ee" />
    <circle cx="15" cy="15" r="5.200" fill="#3d7fd6" />
  </svg>
);

const PaintLogo = () => (
  <svg width="32" height="32" viewBox="0 0 32 32">
    <path d="M2 17Q3 7 15 6t13 9q0 8-8 12-4 2-4-2-1-4-5-3-9 2-9-5z" fill="#e3edf4" stroke="#8aa6bd" />
    <circle cx="7.500" cy="17" r="2.300" fill="#d9442f" />
    <circle cx="11" cy="11.500" r="2.200" fill="#efa63b" />
    <circle cx="17.500" cy="10" r="2.200" fill="#61b54b" />
    <circle cx="14" cy="18" r="2.200" fill="#3c74c4" />
    <path d="M26 6L17 28" stroke="#d0924f" strokeWidth="4" />
    <path d="M23 1l3 2 4-1-2 7-5-1z" fill="#bd9871" />
  </svg>
);

const Taskbar = () => (
  <TaskBar>
    <TaskSlot $w={54}>
      <StartOrb />
    </TaskSlot>
    <TaskSlot $w={70}>
      <IeLogo />
    </TaskSlot>
    <TaskSlot $w={50}>
      <MediaLogo />
    </TaskSlot>
    <TaskSlot $w={78}>
      <ExplorerLogo />
    </TaskSlot>
    <TaskSlot $w={46}>
      <ChromeLogo />
    </TaskSlot>
    <TaskButton $bright>
      <PartLogo size={28} c="#fbf67a" />
    </TaskButton>
    <TaskButton>
      <PaintLogo />
    </TaskButton>
    <Lang>EN</Lang>
    <Tray>
      <svg width="8" height="5" viewBox="0 0 8 5">
        <path d="M0 4.500L4 0l4 4.500z" fill="#fff" />
      </svg>
      <svg width="16" height="16" viewBox="0 0 16 16">
        <path d="M1.500 1v14M2 2h4l2 1.500h4V9H2z" fill="#fff" stroke="#fff" />
        <circle cx="11" cy="10.500" r="4.500" fill="#d22d22" />
        <path d="M9 8.500l4 4M13 8.500l-4 4" stroke="#fff" strokeWidth="1.500" />
      </svg>
      <svg width="16" height="16" viewBox="0 0 16 16" fill="none" stroke="#fff">
        <path d="M5.500 4.500h9v7h-9zM7 14h6M10 11.500V14M.500 3.500h4v3h-4zM1.500 1v2M3.500 1v2M2.500 6.500V11h3" strokeWidth="1.300" />
      </svg>
      <svg width="16" height="16" viewBox="0 0 16 16" fill="none">
        <path d="M1 5.500h2.500L7 2v12l-3.500-3.500H1z" fill="#fff" />
        <path d="M9 6q1 2 0 4M11 4q2.500 4 0 8M13 2.500q3.500 5.500 0 11" stroke="#dfe9f2" />
      </svg>
    </Tray>
    <Clock>
      <span>7:23 AM</span>
      <span>12/9/2014</span>
    </Clock>
    <ShowDesktop />
  </TaskBar>
);

/* ---------- styles ---------- */

const dots = css`
  background-image: radial-gradient(circle at 0.5px 0.5px, #7d93a4 0.7px, transparent 0.8px);
  background-size: 2px 2px;
`;

const Desktop = styled.div`
  width: 1024px;
  height: 768px;
  display: flex;
  flex-direction: column;
  background: #dceaf3;
  overflow: hidden;
`;

const Defs = styled.svg`
  position: absolute;
`;

const Title = styled.header`
  display: flex;
  align-items: flex-start;
  height: 22px;
  padding: 2px 4px 0 0;
  border-bottom: 1px solid #19365f;
  background:
    radial-gradient(ellipse 17px 14px at 738px 15px, #9dc5df 0, rgba(125, 169, 205, 0.8) 45%, transparent),
    radial-gradient(ellipse 22px 14px at 820px 16px, #7fabe0 0, rgba(109, 155, 211, 0.8) 45%, transparent),
    radial-gradient(ellipse 18px 14px at 893px 16px, #9cc4df 0, rgba(125, 169, 205, 0.8) 45%, transparent),
    linear-gradient(to right, #a5bdd3 0, #8dabc9 130px, #7e9fc4 225px, #436a9b 255px, #275187 310px, #34659c 390px, #3c6da5 520px, #22477b 640px, #3b699f 700px, #244d86 780px, #305e96 900px, #37649b 1024px);
`;

const TitleText = styled.div`
  margin-left: 4px;
  margin-top: 1px;
  width: 226px;
  font: 12px/16px "Noto Sans", "Open Sans", sans-serif;
  letter-spacing: -0.17px;
  white-space: nowrap;
  color: #10151c;
`;

const WindowButtons = styled.div`
  display: flex;
  margin: -2px 0 0 auto;
  height: 18px;
  border: 1px solid #dce8f3;
  border-top: 0;
  border-radius: 0 0 5px 5px;
  overflow: hidden;
`;

const WinButton = styled.div`
  display: flex;
  align-items: center;
  justify-content: center;
  width: ${({ $w }) => $w}px;
  border-left: 1px solid #22395a;
  background: ${({ $close }) =>
    $close
      ? "linear-gradient(#e2a193 0, #cf6551 45%, #b02a1b 50%, #d4543a)"
      : "linear-gradient(#b3c4d8 0, #8ca4c0 45%, #57769d 50%, #7798bd)"};
`;

const Menu = styled.nav`
  display: flex;
  align-items: center;
  gap: 14px;
  height: 29px;
  padding: 5px 0 0 7px;
  font-size: 12px;
  letter-spacing: 0.15px;
  border-bottom: 1px solid #bcd2e3;
  background: linear-gradient(#fafcfe, #e4eef5);
`;

const ToolArea = styled.div`
  height: 62px;
  padding-top: 2px;
  border-bottom: 1px solid #b4cadb;
  background: linear-gradient(#deebf4, #dbe9f2);
`;

const ToolRow = styled.div`
  display: flex;
  align-items: center;
  height: 28px;
`;

const Handle = styled.div`
  width: 14px;
  height: 28px;
  padding: 0 6px 0 4px;

  &::before {
    content: "";
    display: block;
    height: 27px;
    ${dots}
  }
`;

const Cell = styled.div`
  position: relative;
  display: flex;
  align-items: center;
  justify-content: center;
  flex: none;
  width: 28px;
  height: 28px;

  ${({ $active }) =>
    $active &&
    css`
      width: 26px;
      height: 26px;
      margin: 0 1px;
      border: 1px solid #7e9db5;
      border-radius: 2px;
      background: linear-gradient(#c7dced, #def4fd);
    `}
`;

const Letters = styled.span`
  position: absolute;
  right: 2px;
  top: 3px;
  font: 9px/9px "Liberation Mono", monospace;
  letter-spacing: 1px;
  color: #222;
`;

const Question = styled.span`
  position: absolute;
  left: 14px;
  top: 5px;
  font: bold 16px/18px "Liberation Serif", serif;
  color: #8a1082;
`;

const Caret = styled.i`
  flex: none;
  width: 0;
  height: 0;
  border: solid transparent;
  border-width: ${({ $big }) => ($big ? "4px 4px 0" : "4px 3px 0")};
  border-top-color: ${({ $dim }) => ($dim ? "#b2bcc4" : "#2d343a")};
`;

const CaretBox = styled.div`
  display: flex;
  justify-content: center;
  width: ${({ $w }) => $w}px;
`;

const SelectTool = styled.div`
  display: flex;
  align-items: center;
  width: 39px;
  height: 26px;
  margin-left: 1px;
  padding-left: 2px;
  border: 1px solid #adc0ce;
  border-radius: 2px;
`;

const SelectCaret = styled.div`
  display: flex;
  align-items: center;
  justify-content: center;
  align-self: stretch;
  flex: 1;
  margin-left: 3px;
  border-left: 1px solid #adc0ce;
`;

const MessageArea = styled.section`
  display: flex;
  flex-direction: column;
  height: 84px;
  padding-top: 2px;
  border-top: 1px solid #f6fafc;
  border-bottom: 1px solid #f4f9fc;
  background: #dceaf3;
`;

const MessageLine = styled.p`
  display: flex;
  align-items: center;
  gap: 2px;
  height: 16px;
  margin: 0;
  padding-left: 2px;
  font-size: 11px;
  letter-spacing: ${({ $wide }) => ($wide ? "0.08px" : "-0.07px")};
`;

const Bullet = styled.i`
  width: 5px;
  height: 5px;
  margin: 0 3px 0 4px;
  border-radius: 50%;
  background: #1513b4;
`;

const StatusLine = styled.div`
  display: flex;
  align-items: flex-start;
  margin-top: 7px;
`;

const StatusLight = styled.div`
  display: flex;
  align-items: center;
  justify-content: center;
  width: 32px;
  height: 26px;
  margin-left: 735px;
  border: solid #b9cad7;
  border-width: 0 1px;
  box-shadow: inset 1px 0 #fff, 1px 0 #fff;
`;

const Filter = styled.div`
  display: flex;
  align-items: center;
  justify-content: space-between;
  width: 154px;
  height: 23px;
  margin: 2px 0 0 99px;
  padding: 0 4px 0 5px;
  border: 1px solid #6f93b3;
  border-radius: 2px;
  background: #fff;
  font-size: 12px;
  letter-spacing: 0.3px;
`;

const Workspace = styled.main`
  display: flex;
  height: 531px;
`;

const NavPanel = styled.aside`
  display: flex;
  width: 240px;
  background: #d3e1ed;
`;

const NavMain = styled.div`
  display: flex;
  flex-direction: column;
  width: 231px;
`;

const Tabs = styled.div`
  position: relative;
  height: 29px;
  padding: 4px 0 0 7px;
`;

const TabIcons = styled.div`
  position: absolute;
  top: 7px;
  left: 19px;
  display: flex;
  gap: 21px;
`;

const NavBody = styled.div`
  flex: 1;
  padding: 0 7px 7px;
  border: solid #a9bccb;
  border-width: 1px 1px 0 0;
  background: linear-gradient(to right, #fdfeff 0, #f3f7fa 35px, #cfdeea 150px, #d3e1ed);
  border-image: linear-gradient(#a9bccb, #d3e1ed 22%) 1;
`;

const NavHeader = styled.div`
  display: flex;
  align-items: center;
  gap: 8px;
  height: 30px;
  padding: 0 0 3px 18px;
`;

const NavTitle = styled.h2`
  width: 118px;
  margin: 0;
  font-size: 12px;
  letter-spacing: -0.05px;
  color: #40474f;
`;

const NavTool = styled.div`
  display: flex;
  align-items: center;
  gap: 3px;
`;

const TreeBox = styled.div`
  width: 216px;
  height: 464px;
  border: 1px solid #7ea3bd;
  border-radius: 4px;
  background: #fff;
  font-family: "Noto Sans", "Open Sans", sans-serif;
  font-size: 12px;
  letter-spacing: -0.25px;
`;

const RootRow = styled.div`
  display: flex;
  align-items: center;
  gap: 4px;
  height: 18px;
  padding-left: 4px;
  letter-spacing: -0.1px;
`;

const TreeRow = styled.div`
  display: flex;
  align-items: center;
  height: 18px;
  margin-left: 12px;
  color: ${({ $off }) => ($off ? "#b9b9b9" : "#30353a")};

  &::before {
    content: "";
    align-self: flex-start;
    width: 11px;
    height: ${({ $last }) => ($last ? 10 : 18)}px;
    border-left: 1px dotted #8f979d;
    background: linear-gradient(to right, #8f979d 50%, transparent 50%) 0 9px / 2px 1px repeat-x;
  }

  span {
    margin-left: 2px;
  }
`;

const Packed = styled.i`
  width: 5px;
  height: 7px;
  margin: -5px 0 0 3px;
  border: 1px solid #333;
`;

const Splitters = styled.div`
  display: flex;
  flex-direction: column;
  gap: 9px;
  width: 9px;
  padding: 168px 0 0 1px;
`;

const Splitter = styled.div`
  display: flex;
  align-items: center;
  justify-content: center;
  height: ${({ $dark }) => ($dark ? 92 : 95)}px;
  padding-top: ${({ $dark }) => ($dark ? 4 : 0)}px;
  border: 1px solid ${({ $dark }) => ($dark ? "#8496a5" : "#b9c9d6")};
  border-right: 0;
  border-radius: 4px 0 0 4px;
  background: ${({ $dark }) => ($dark ? "#c6d5e3" : "#d2e0ec")};
`;

const Dot = styled.i`
  width: 4px;
  height: 4px;
  border: 1px solid #26303a;
  border-radius: 50%;
`;

const View = styled.section`
  position: relative;
  width: 715px;
  background: linear-gradient(#b9d3e9 0, #a6c2dd 28%, #88a8cb 52%, #6b8fba 76%, #5a78a9);
`;

const Watermark = styled.div`
  position: absolute;
  left: 125px;
  top: 169px;
  display: flex;
  height: 66px;
  color: #e2ecf5;
  text-shadow: 1px 1px 0 #53657c, 2px 1px 1px rgba(60, 75, 100, 0.5);
  white-space: nowrap;
`;

const Hanzi = styled.span`
  flex: none;
  width: 151px;
  margin-top: -2px;
  font: 300 48px/66px "Noto Sans CJK SC", sans-serif;
  letter-spacing: 2px;
`;

const Glyph = styled.span`
  display: flex;
  flex: none;
  justify-content: ${({ $left }) => ($left ? "flex-start" : "center")};
  width: 26px;
  font: 50px/66px "Liberation Serif", "Noto Sans CJK SC", serif;

  span {
    display: block;
    transform: scaleX(${({ $x }) => $x});
  }
`;

const Side = styled.aside`
  display: flex;
  width: 69px;
  background: #dceaf2;
`;

const SideCol = styled.div`
  width: ${({ $w }) => $w}px;
`;

const Rule = styled.div`
  height: 14.4px;
  padding: 5px 1px 0;

  &::before {
    content: "";
    display: block;
    height: 3px;
    ${dots}
  }
`;

const Flyout = styled.i`
  position: absolute;
  left: 32px;
  top: 11px;
  border: solid transparent;
  border-width: 3px 0 3px 4px;
  border-left-color: #222;
`;

const TaskBar = styled.footer`
  display: flex;
  align-items: stretch;
  height: 40px;
  border-top: 1px solid #123d62;
  box-shadow: inset 0 1px #7db4d8;
  background: linear-gradient(to right, #225f87 0, #2e7fad 55px, #3a8fc0 130px, #2c86bf 290px, #2e89c8 450px, #2d80c1 600px, #2470b4 720px, #225b98 790px, #1b4678 850px, #1a4576 1024px);
`;

const TaskSlot = styled.div`
  display: flex;
  flex: none;
  align-items: center;
  justify-content: center;
  width: ${({ $w }) => $w}px;
`;

const TaskButton = styled.div`
  display: flex;
  flex: none;
  align-items: center;
  justify-content: center;
  width: 59px;
  margin: 0 0 1px ${({ $bright }) => ($bright ? 9 : 3)}px;
  border: 1px solid #d6e9f5;
  border-radius: 3px;
  box-shadow: 0 0 0 1px rgba(15, 60, 100, 0.5);
  background: ${({ $bright }) =>
    $bright
      ? "linear-gradient(145deg, #cfe2f0, #8db9da 50%, #b4d3e8)"
      : "linear-gradient(145deg, #92bddd, #4f93c8 50%, #4e9bd1)"};
`;

const Lang = styled.span`
  display: flex;
  flex: none;
  align-items: center;
  width: 406px;
  margin-left: auto;
  padding: 0 0 5px 387px;
  color: #fff;
  font: 11px "Noto Sans", sans-serif;
  letter-spacing: 0.3px;
  background: linear-gradient(40deg, transparent 244px, rgba(166, 197, 223, 0.8) 250px, rgba(143, 181, 214, 0.75) 252px, transparent 258px);
`;

const Tray = styled.div`
  display: flex;
  flex: none;
  align-items: center;
  gap: 8px;
  width: 84px;
  margin-left: 12px;

  svg:first-child {
    margin-right: 5px;
  }
`;

const Clock = styled.div`
  display: flex;
  flex: none;
  flex-direction: column;
  justify-content: center;
  align-items: center;
  width: 68px;
  margin-left: 9px;
  margin-right: 3px;
  padding-bottom: 1px;
  color: #fff;
  font: 11px/17px "Noto Sans", sans-serif;
`;

const ShowDesktop = styled.div`
  flex: none;
  width: 14px;
  border: 1px solid #6c90b3;
  border-right: 0;
  background: linear-gradient(120deg, #6f94b6, #1c456f 60%);
`;

export default App;
